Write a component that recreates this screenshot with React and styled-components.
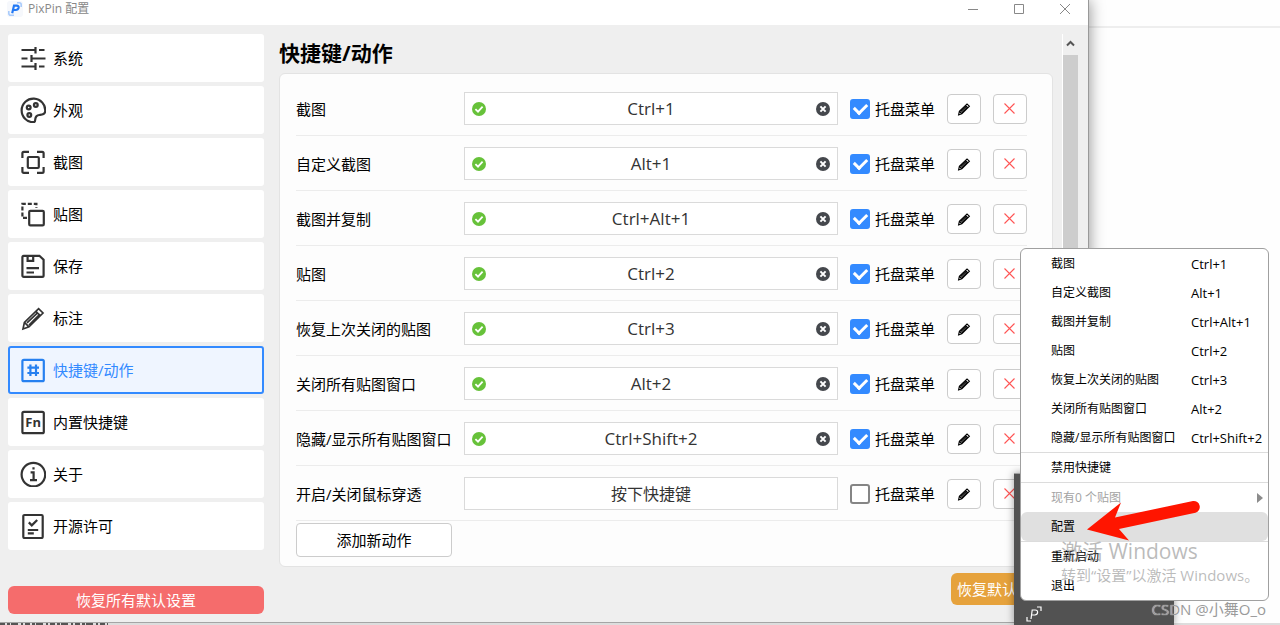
import React, { useState } from 'react'
import styled, { createGlobalStyle } from 'styled-components'

const GlobalStyle = createGlobalStyle`
* {
  box-sizing: border-box;
}
body {
  margin: 0;
  background: #fff;
}
body, button, input {
  font-family: 'Open Sans', 'Noto Sans CJK SC', sans-serif;
}
button {
  padding: 0;
  border: 0;
  background: none;
  color: inherit;
  cursor: pointer;
}
h1, ul {
  margin: 0;
  padding: 0;
}
svg {
  display: block;
  flex: none;
}
`

const Desktop = styled.div`
position: relative;
height: 100vh;
min-height: 625px;
overflow: hidden;
display: flex;
flex-direction: column;
background: linear-gradient(#eee, #eee) 0 26px / 100% 2px no-repeat #fefefe;
`

const Window = styled.div`
flex: 1;
width: 85%;
display: flex;
flex-direction: column;
background: #efefef;
border-bottom: 1px solid #a5a5a5;
box-shadow: 1px 0 0 #999, 2px 0 14px rgba(0, 0, 0, 0.4);
`

const TaskStrip = styled.div`
height: 2px;
background: #ddd;
`

const TitleBar = styled.header`
height: 25px;
display: flex;
align-items: flex-start;
background: #fff;
color: #888;
`

const AppName = styled.div`
flex: 1;
display: flex;
align-items: center;
gap: 5px;
height: 18px;
padding-left: 7px;
font-size: 12px;
line-height: 16px;
`

const WinButton = styled.button`
width: 46px;
height: 18px;
display: flex;
align-items: center;
justify-content: center;
`

const Body = styled.div`
flex: 1;
display: flex;
padding: 9px 10px 8px 8px;
`

const Sidebar = styled.nav`
width: 256px;
flex: none;
display: flex;
flex-direction: column;
gap: 4px;
`

const NavItem = styled.button`
height: 48px;
display: flex;
align-items: center;
gap: 7px;
padding: 0 10px;
border: 2px solid ${p => (p.$active ? '#338aff' : '#fff')};
border-radius: 3px;
background: ${p => (p.$active ? '#eff5ff' : '#fff')};
color: ${p => (p.$active ? '#338aff' : '#000')};
font-size: 15px;
line-height: 20px;
svg {
  color: ${p => (p.$active ? '#2680f0' : '#333')};
}
`

const ResetAll = styled.button`
height: 28px;
margin-top: auto;
border-radius: 6px;
background: #f56c6c;
color: #fff;
font-size: 15px;
line-height: 20px;
`

const Main = styled.main`
flex: 1;
min-width: 0;
padding: 6px 9px 0 15px;
display: flex;
flex-direction: column;
`

const Title = styled.h1`
height: 33px;
font-size: 21px;
line-height: 26px;
font-weight: 700;
`

const Card = styled.section`
padding: 7px 25px 9px 16px;
border: 1px solid #e3e3e3;
border-radius: 6px;
background: #fdfdfd;
`

const Row = styled.div`
height: 55px;
display: flex;
align-items: center;
gap: 12px;
padding-top: 1px;
border-bottom: 1px solid #ececec;
`

const RowLabel = styled.label`
width: 156px;
font-size: 15px;
line-height: 20px;
white-space: nowrap;
`

const Field = styled.div`
flex: 1;
min-width: 0;
height: 33px;
display: flex;
align-items: center;
padding: 0 7px;
border: 1px solid #dadada;
background: #fff;
`

const KeyInput = styled.input`
flex: 1;
min-width: 0;
padding: 0;
border: 0;
outline: 0;
background: none;
color: #333;
text-align: center;
font-size: ${p => (p.$empty ? '16px' : '17px')};
line-height: 24px;
&::placeholder {
  color: #333;
  opacity: 1;
}
`

const TrayLabel = styled.label`
width: 85px;
display: flex;
align-items: center;
gap: 5px;
font-size: 15px;
line-height: 20px;
white-space: nowrap;
`

const Check = styled.input.attrs({ type: 'checkbox' })`
appearance: none;
flex: none;
width: 20px;
height: 20px;
margin: 0;
display: grid;
place-items: center;
border: 2px solid #858585;
border-radius: 3px;
background: #fff;
&:checked {
  border-color: #338aff;
  background: #338aff;
}
&:checked::after {
  content: '';
  width: 10px;
  height: 6px;
  margin-bottom: 3px;
  border-left: 3px solid #fff;
  border-bottom: 3px solid #fff;
  transform: rotate(-45deg);
}
`

const SquareButton = styled.button`
width: 34px;
height: 30px;
display: flex;
flex: none;
align-items: center;
justify-content: center;
border: 1px solid #ccc;
border-radius: 4px;
background: #fff;
`

const AddButton = styled.button`
width: 156px;
height: 34px;
margin-top: 2px;
display: block;
border: 1px solid #ccc;
border-radius: 4px;
background: #fff;
font-size: 15px;
line-height: 20px;
`

const ResetPage = styled.button`
align-self: flex-end;
width: 102px;
height: 32px;
margin-top: 6px;
border-radius: 6px;
background: #e6a23c;
color: #fff;
font-size: 15px;
line-height: 20px;
`

const ScrollBar = styled.div`
width: 16px;
display: flex;
flex-direction: column;
border-left: 1px solid #fff;
svg {
  margin: 5px 3px 7px;
}
`

const Thumb = styled.div`
flex: 1;
background: #cdcdcd;
`

const Tray = styled.div`
position: absolute;
right: 106px;
bottom: 0;
width: 160px;
height: 152px;
display: flex;
align-items: flex-end;
padding: 0 12px 3px;
background: #525252;
border-top: 1px solid #a0a0a0;
box-shadow: 0 0 8px rgba(0, 0, 0, 0.4);
`

const Menu = styled.ul`
position: absolute;
right: 11px;
bottom: 24px;
width: 249px;
list-style: none;
border: 1px solid #a0a0a0;
border-radius: 6px;
background: #fff;
overflow: hidden;
`

const MenuItem = styled.button`
width: 100%;
height: 29px;
display: flex;
align-items: center;
padding: 0 5px 0 30px;
border-radius: 6px;
background: ${p => (p.$hover ? '#e0e0e0' : 'none')};
color: ${p => (p.$muted ? '#a3a3a3' : '#000')};
font-size: 12px;
line-height: 16px;
text-align: left;
white-space: nowrap;
svg {
  margin-left: auto;
}
`

const MenuName = styled.span`
width: 140px;
`

const MenuKeys = styled.span`
font-size: 13px;
`

const MenuLine = styled.li`
height: 1px;
background: #dcdcdc;
`

const Activate = styled.div`
position: absolute;
right: 23px;
bottom: 39px;
width: 196px;
color: rgba(120, 120, 120, 0.5);
font-size: 15px;
line-height: 22px;
white-space: nowrap;
pointer-events: none;
div:first-child {
  font-size: 21px;
  line-height: 26px;
}
`

const Credit = styled.div`
position: absolute;
right: 14px;
bottom: 6px;
color: #9a9a9a;
font-size: 15px;
line-height: 20px;
text-shadow: 0 0 1px #fff;
`

const Arrow = styled.svg`
position: absolute;
right: 80px;
bottom: 83px;
`

const PENCIL = 'M3 24l1.4-6.6L18.6 3.6 23 8 9 21.8zM4.4 17.4L9 21.8M15.8 6.4l4.6 4.4M7 17.8L18 7.4M9 20L20 9.2'

const icons = {
  system: <path d="M1.5 5H15M15.5 2v6.6M19 5h5.5M1.5 13.5h6M11.5 10v7M11.5 13.5h14M1.5 21.5H15M15.5 18v7M19 21.5h5.5" />,
  look: (
    <>
      <path d="M25.2 14.4A11.8 11.8 0 1 0 13.6 25.2c1.4 0 1.6-1.2 1.7-3 .2-2.4 1.4-3.9 4-4.2 3-.4 5.6-.4 5.9-3.6z" />
      <circle cx="8.7" cy="10.5" r="1.9" />
      <circle cx="15.8" cy="8" r="1.9" />
      <circle cx="9.3" cy="18" r="1.9" />
    </>
  ),
  capture: (
    <>
      <path d="M2.4 9V4.2q0-1.4 1.4-1.4H9M17 2.8h5.2q1.4 0 1.4 1.4V9M23.6 18v4.4q0 1.4-1.4 1.4H17M9 23.8H3.8q-1.4 0-1.4-1.4V18" />
      <rect x="7.8" y="8" width="11" height="11" rx="1" />
    </>
  ),
  pin: (
    <>
      <path strokeDasharray="4 2" d="M7 16.8H2.4V2.8h14V7" />
      <rect x="9.2" y="9.8" width="14.6" height="14.6" rx="1.2" />
    </>
  ),
  save: (
    <>
      <path d="M3.8 2.8h15.6l4.2 4v15.6q0 1.4-1.4 1.4H3.8q-1.4 0-1.4-1.4V4.2q0-1.4 1.4-1.4z" />
      <path d="M7.6 3v4.8h5.6V3M6.5 15.2H19M6.5 19.5H14" />
    </>
  ),
  mark: <path strokeWidth="1.7" d={PENCIL} />,
  keys: (
    <>
      <rect x="2.4" y="2.8" width="21.4" height="21.4" rx="1.5" />
      <path d="M10.4 7.5v11.5M16 7.5v11.5M7.4 10.6H19M7.4 16H19" />
    </>
  ),
  fn: (
    <>
      <rect x="2.4" y="2.8" width="21.4" height="21.4" rx="1.5" />
      <text x="13.1" y="18.4" textAnchor="middle" fontSize="13" fontWeight="700" fill="currentColor" stroke="none">Fn</text>
    </>
  ),
  about: (
    <>
      <circle cx="13.4" cy="13.6" r="11.8" />
      <path d="M10.6 11.4h3V19M10 19.2h7M12.4 7.4h2.2" />
    </>
  ),
  license: (
    <>
      <rect x="3.3" y="2" width="19.4" height="23" rx="1.2" />
      <path d="M8.8 9.4l3 3 5.4-5.4M7.8 17h10.4M7.8 20.4h6" />
    </>
  ),
}

const NavIcon = ({ name }) => (
  <svg width="26" height="26" viewBox="0 0 26 26" fill="none" stroke="currentColor" strokeWidth="2.2" aria-hidden="true">
    {icons[name]}
  </svg>
)

const OkIcon = () => (
  <svg width="14" height="14" viewBox="0 0 14 14">
    <circle cx="7" cy="7" r="7" fill="#67c23a" />
    <path d="M3.4 7.2l2.6 2.5 4.6-5" fill="none" stroke="#fff" strokeWidth="1.8" />
  </svg>
)

const ClearIcon = () => (
  <svg width="14" height="14" viewBox="0 0 14 14">
    <circle cx="7" cy="7" r="7" fill="#45484d" />
    <path d="M4.4 4.4l5.2 5.2M9.6 4.4L4.4 9.6" stroke="#fff" strokeWidth="2" />
  </svg>
)

const nav = [
  ['system', '系统'],
  ['look', '外观'],
  ['capture', '截图'],
  ['pin', '贴图'],
  ['save', '保存'],
  ['mark', '标注'],
  ['keys', '快捷键/动作'],
  ['fn', '内置快捷键'],
  ['about', '关于'],
  ['license', '开源许可'],
]

const actions = [
  ['截图', 'Ctrl+1'],
  ['自定义截图', 'Alt+1'],
  ['截图并复制', 'Ctrl+Alt+1'],
  ['贴图', 'Ctrl+2'],
  ['恢复上次关闭的贴图', 'Ctrl+3'],
  ['关闭所有贴图窗口', 'Alt+2'],
  ['隐藏/显示所有贴图窗口', 'Ctrl+Shift+2'],
  ['开启/关闭鼠标穿透', ''],
]

const ActionRow = ({ id, name, keys }) => (
  <Row>
    <RowLabel htmlFor={id}>{name}</RowLabel>
    <Field>
      {keys && <OkIcon />}
      <KeyInput id={id} $empty={!keys} defaultValue={keys} placeholder="按下快捷键" readOnly />
      {keys && <button aria-label="清除"><ClearIcon /></button>}
    </Field>
    <TrayLabel>
      <Check defaultChecked={!!keys} />
      托盘菜单
    </TrayLabel>
    <SquareButton aria-label="编辑">
      <svg width="14" height="14" viewBox="0 0 26 26" fill="none" stroke="#000" strokeWidth="2.1">
        <path d={PENCIL} />
      </svg>
    </SquareButton>
    <SquareButton aria-label="删除">
      <svg width="12" height="12" viewBox="0 0 12 12" stroke="#f55" strokeWidth="1.1">
        <path d="M.5.5l10 10M10.5.5l-10 10" />
      </svg>
    </SquareButton>
  </Row>
)

const TrayMenu = () => (
  <Menu>
    {actions.slice(0, 7).map(([name, keys]) => (
      <li key={name}>
        <MenuItem>
          <MenuName>{name}</MenuName>
          <MenuKeys>{keys}</MenuKeys>
        </MenuItem>
      </li>
    ))}
    <MenuLine />
    <li><MenuItem>禁用快捷键</MenuItem></li>
    <MenuLine />
    <li>
      <MenuItem $muted>
        现有0 个贴图
        <svg width="6" height="10" viewBox="0 0 6 10"><path d="M0 0l6 5-6 5z" fill="#8c8c8c" /></svg>
      </MenuItem>
    </li>
    <li><MenuItem $hover>配置</MenuItem></li>
    <MenuLine />
    <li><MenuItem>重新启动</MenuItem></li>
    <li><MenuItem>退出</MenuItem></li>
  </Menu>
)

const App = () => {
  const [page, setPage] = useState('keys')

  return (
    <>
      <GlobalStyle />
      <Desktop>
        <Window>
          <TitleBar>
            <AppName>
              <svg width="16" height="16" viewBox="0 0 16 16" fill="none">
                <rect width="16" height="16" rx="3" fill="#f6f8fc" />
                <path d="M10 1.8h2.2q2 0 2 2V6M1.8 10v2.2q0 2 2 2H7" stroke="#a9cbfb" strokeWidth="1.6" />
                <path d="M5.2 12.2L7 4.6h2.6q2.4.1 2 2.2-.5 2.2-2.8 2.2H6.4" stroke="#2379f5" strokeWidth="2.2" />
              </svg>
              PixPin 配置
            </AppName>
            <WinButton aria-label="最小化">
              <svg width="10" height="10" stroke="#888"><path d="M0 5.5h10" /></svg>
            </WinButton>
            <WinButton aria-label="最大化">
              <svg width="10" height="10" fill="none" stroke="#888"><path d="M.5.5h9v9h-9z" /></svg>
            </WinButton>
            <WinButton aria-label="关闭">
              <svg width="10" height="10" stroke="#888"><path d="M0 0l10 10M10 0L0 10" /></svg>
            </WinButton>
          </TitleBar>
          <Body>
            <Sidebar>
              {nav.map(([id, text]) => (
                <NavItem key={id} $active={page === id} onClick={() => setPage(id)}>
                  <NavIcon name={id} />
                  {text}
                </NavItem>
              ))}
              <ResetAll>恢复所有默认设置</ResetAll>
            </Sidebar>
            <Main>
              <Title>快捷键/动作</Title>
              <Card>
                {actions.map(([name, keys], i) => (
                  <ActionRow key={name} id={`key-${i}`} name={name} keys={keys} />
                ))}
                <AddButton>添加新动作</AddButton>
              </Card>
              <ResetPage>恢复默认设置</ResetPage>
            </Main>
            <ScrollBar>
              <svg width="9" height="9" viewBox="0 0 9 9" fill="none" stroke="#555" strokeWidth="2">
                <path d="M1 6.5L4.5 3 8 6.5" />
              </svg>
              <Thumb />
            </ScrollBar>
          </Body>
        </Window>
        <TaskStrip>
          <svg width="110" height="2"><path d="M0 1h108" stroke="#555" strokeWidth="2" strokeDasharray="5 2 3 1 7 3 2 2" /></svg>
        </TaskStrip>

        <Tray>
          <svg width="16" height="16" viewBox="0 0 16 16" fill="none" stroke="#fff" strokeWidth="1.2">
            <path d="M11 1h4v4M1 11v4h4M5 13L6.2 4h3q2.6 0 2.4 2.4T8.8 9H5.6" />
          </svg>
        </Tray>
        <TrayMenu />
        <Activate>
          <div>激活 Windows</div>
          <div>转到“设置”以激活 Windows。</div>
        </Activate>
        <Arrow width="114" height="42" viewBox="0 0 114 42" fill="#ff1500">
          <path d="M1 29.5L35 2.5l-6 15L107 1a6 6 0 0 1 2.5 11.7L33 29l10 11.5z" />
        </Arrow>
        <Credit>CSDN @小舞O_o</Credit>
      </Desktop>
    </>
  )
}

export default App
